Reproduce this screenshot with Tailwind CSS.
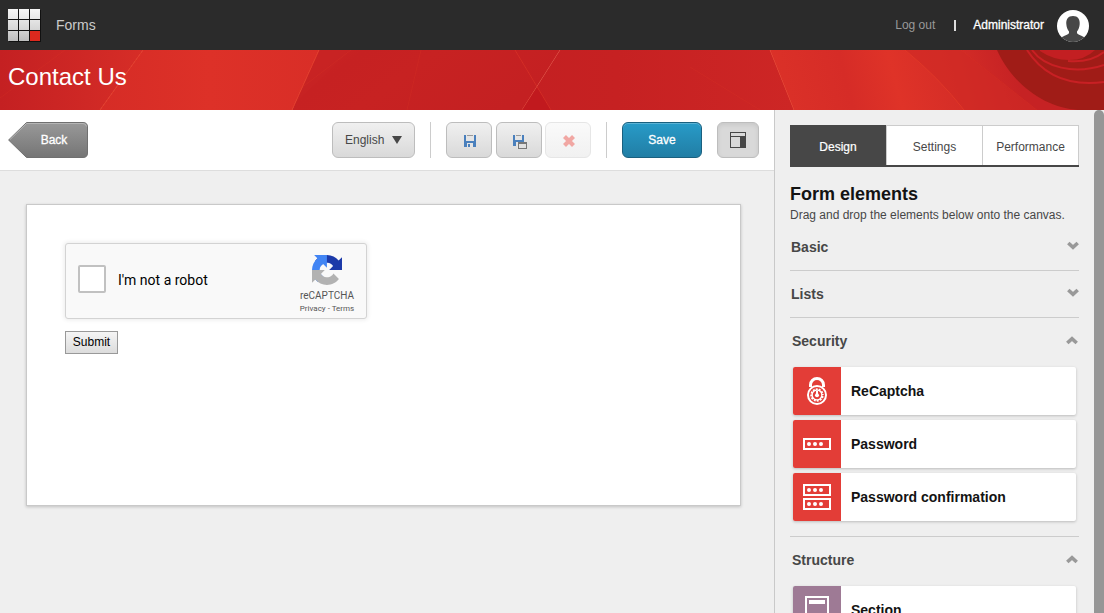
<!DOCTYPE html>
<html lang="en">
<head>
<meta charset="utf-8">
<title>Forms - Contact Us</title>
<script src="https://cdn.jsdelivr.net/npm/@tailwindcss/browser@4"></script>
</head>
<body class="h-[613px] w-[1104px] overflow-hidden flex flex-col bg-[#efefef] font-['Liberation_Sans',Arial,sans-serif] text-xs text-[#474747]">

<header class="h-[50px] shrink-0 bg-[#2b2b2b] flex items-center pl-2 pr-[15px]">
  <svg class="w-[33px] h-[33px] shrink-0" viewBox="0 0 33 33">
    <defs><linearGradient id="tile" gradientUnits="userSpaceOnUse" x1="0" y1="0" x2="0" y2="32"><stop offset="0" stop-color="#f6f6f6"/><stop offset=".6" stop-color="#d8d8d8"/><stop offset="1" stop-color="#bdbdbd"/></linearGradient></defs>
    <path fill="#111" d="M1 1h32v32H1z"/>
    <path fill="url(#tile)" d="M0 0h10v10H0zM11 0h10v10H11zM22 0h10v10H22zM0 11h10v10H0zM11 11h10v10H11zM22 11h10v10H22zM0 22h10v10H0zM11 22h10v10H11z"/>
    <path fill="#dc291e" d="M22 22h10v10H22z"/>
  </svg>
  <span class="ml-[15px] text-sm text-[#ccc]">Forms</span>
  <span class="ml-auto text-[#999]">Log out</span>
  <span class="w-0.5 h-[11px] ml-[19px] bg-[#ddd]"></span>
  <span class="ml-[17px] text-white [-webkit-text-stroke:0.3px_white]">Administrator</span>
  <svg class="ml-[13px] mt-0.5 w-8 h-8 shrink-0" viewBox="0 0 32 32">
    <clipPath id="av"><circle cx="16" cy="16" r="16"/></clipPath>
    <g clip-path="url(#av)"><path fill="#fff" d="M0 0h32v32H0z"/>
    <path fill="#474747" d="M16 6c5 0 7 3.500 6.700 8-.2 3.500-1.200 5.500-2.700 7.500v1.500c1 2 4.500 2.500 9 5V32H3v-4c4.500-2.500 8-3 9-5v-1.500c-1.500-2-2.500-4-2.700-7.500C9 9.500 11 6 16 6z"/></g>
  </svg>
</header>

<section class="h-[60px] shrink-0 grid">
  <svg class="col-start-1 row-start-1 w-full h-[60px]" viewBox="0 0 1104 60" preserveAspectRatio="none">
    <defs>
      <linearGradient id="b1"><stop offset="0" stop-color="#c42022"/><stop offset="1" stop-color="#d62d27"/></linearGradient>
      <linearGradient id="b2"><stop offset="0" stop-color="#d62c26"/><stop offset=".5" stop-color="#dd3128"/><stop offset="1" stop-color="#d92e27"/></linearGradient>
      <linearGradient id="b3" x1="0" y1="0" x2="1" y2=".3"><stop offset="0" stop-color="#cc2523"/><stop offset=".25" stop-color="#c62122"/><stop offset=".5" stop-color="#c72222"/><stop offset="1" stop-color="#c42022"/></linearGradient>
      <linearGradient id="b4"><stop offset="0" stop-color="#c42022"/><stop offset=".35" stop-color="#c62122"/><stop offset="1" stop-color="#cd2625"/></linearGradient>
      <linearGradient id="b5" gradientUnits="userSpaceOnUse" x1="780" y1="60" x2="1010" y2="0"><stop offset="0" stop-color="#db3128"/><stop offset=".3" stop-color="#d62c27"/><stop offset=".5" stop-color="#df3328"/><stop offset=".75" stop-color="#d52d27"/><stop offset="1" stop-color="#c62224"/></linearGradient>
    </defs>
    <path fill="url(#b1)" d="M0 0h143L100 60H0z"/>
    <path fill="url(#b2)" d="M143 0h176l-27 60H100z"/>
    <path fill="url(#b3)" d="M319 0h241l-38 60H292z"/>
    <path fill="#c72323" d="M319 0h32L296 52z" opacity=".7"/>
    <path fill="url(#b4)" d="M560 0h210l24 60H522z"/>
    <path fill="#c1191e" d="M537 37l14 23h-29z"/>
    <path fill="url(#b5)" d="M770 0h334v60H794z"/>
    <path fill="#d02925" d="M905 0h56l76 60h-73q-25-32-59-60z" opacity=".65"/>
    <g fill="none" stroke="#e23a28" stroke-width="1">
      <path d="M143 0L100 60M319 0l-27 60"/>
      <path d="M770 0l24 60M905 0q34 28 59 60" opacity=".85"/>
      <path d="M560 0l-38 60M515 0l36 60" opacity=".5"/>
      <path d="M65 0L0 48M351 0L296 42M421 0l-14 60M690 17l70 43M961 0l76 60" opacity=".2"/>
    </g>
    <path fill="#a01c17" d="M997 0C1012 34 1045 58 1078 60H1104V0z"/>
    <path fill="#c31f22" d="M1040 1q13 9 29 9 16 0 26-10h-55z"/>
    <g fill="none" stroke="#c82024">
      <path stroke-width="2" d="M1027 0c14 22 38 37 77 32"/>
      <path stroke-width="2" d="M1032 0c12 17 42 25 72 15"/>
      <path stroke-width="2" d="M1068 11q22 2 36-9"/>
    </g>
  </svg>
  <h1 class="col-start-1 row-start-1 pl-2 pt-[11px] text-2xl leading-8 text-white">Contact Us</h1>
</section>

<div class="flex flex-1 min-h-0">
  <main class="w-[774px] shrink-0 flex flex-col">
    <div class="h-[61px] shrink-0 bg-white border-b border-[#ddd] flex items-start pt-3 pl-2">
      <button class="grid w-20 h-9">
        <svg class="col-start-1 row-start-1 w-20 h-9" viewBox="0 0 80 36">
          <defs><linearGradient id="bk" x2="0" y2="1"><stop offset="0" stop-color="#999"/><stop offset="1" stop-color="#757575"/></linearGradient></defs>
          <path d="M18.500.5H75q4.500 0 4.500 4.500v26q0 4.500-4.500 4.500H18.500L.6 18z" fill="url(#bk)" stroke="#707070"/>
          <path d="M2 17.500L18.500 1.500H75q3 0 3.500 3" fill="none" stroke="#b5b5b5"/>
        </svg>
        <span class="col-start-1 row-start-1 self-center pl-3 text-white [-webkit-text-stroke:0.3px_white]">Back</span>
      </button>
      <button class="ml-[244px] w-[83px] h-9 rounded-md border border-[#bdbdbd] bg-linear-to-b from-[#f0f0f0] to-[#d9d9d9] flex items-center pl-3">English
        <svg class="ml-2 w-[10px] h-2" viewBox="0 0 10 8"><path fill="#474747" d="M0 0h10L5 8z"/></svg>
      </button>
      <span class="ml-[15px] w-px h-9 bg-[#ccc]"></span>
      <button class="ml-[15px] w-[46px] h-9 rounded-md border border-[#bdbdbd] bg-linear-to-b from-[#f0f0f0] to-[#d9d9d9] flex items-center justify-center">
        <svg class="ml-0.5 mt-0.5 w-3 h-3" viewBox="0 0 12 12"><path fill="#4a80bd" d="M0 0h12v12H0z"/><path fill="#e5e5e5" d="M2 0h8v6H2zM3 8h6v4H3z"/><path fill="#999" d="M3 0h6v1H3z"/><path fill="#4a80bd" d="M4 9h2v3H4z"/></svg>
      </button>
      <button class="ml-1 w-[46px] h-9 rounded-md border border-[#bdbdbd] bg-linear-to-b from-[#f0f0f0] to-[#d9d9d9] flex items-center justify-center">
        <svg class="ml-px mt-[3px] w-[14px] h-[14px]" viewBox="0 0 14 14"><path fill="#4a80bd" d="M0 0h11v11H0z"/><path fill="#e5e5e5" d="M2 0h7v5H2zM3 7h11v7H4v-3H3z"/><path fill="#999" d="M3 0h5v1H3z"/><path fill="#777" fill-rule="evenodd" d="M5 7h9v7H5zM6 9v4h7V9z"/><path fill="#e0e0e0" d="M6 9h7v4H6z"/></svg>
      </button>
      <button class="ml-[3px] w-[46px] h-9 rounded-md border border-[#e6e6e6] bg-linear-to-b from-[#fafafa] to-[#f1f1f1] flex items-center justify-center">
        <svg class="ml-0.5 mt-0.5 w-3 h-3" viewBox="0 0 12 12"><path d="M1.500 1.500l9 9M10.500 1.500l-9 9" stroke="#f1a7a3" stroke-width="4.200" fill="none"/></svg>
      </button>
      <span class="ml-[15px] w-px h-9 bg-[#ccc]"></span>
      <button class="ml-[15px] w-20 h-9 rounded-md border border-[#1a607f] bg-linear-to-b from-[#289bc8] to-[#217ea5] shadow-[inset_0_1px_0_#5cb3d5] text-white [-webkit-text-stroke:0.3px_white]">Save</button>
      <button class="ml-[15px] w-[42px] h-9 rounded-md border border-[#bdbdbd] bg-[#d9d9d9] shadow-[inset_0_2px_4px_rgba(0,0,0,0.08)] flex items-center justify-center">
        <svg class="w-4 h-4" viewBox="0 0 16 16"><path fill="#474747" fill-rule="evenodd" d="M0 0h16v16H0zM1 1v3h14V1zM1 5v10h9V5z"/></svg>
      </button>
    </div>
    <div class="ml-[26px] mt-[33px] w-[715px] h-[302px] bg-white border border-[#c9c9c9] shadow-[0_1px_3px_rgba(0,0,0,0.2)] pl-[38px] pt-[38px] text-black">
      <div class="w-[302px] h-[76px] rounded-[3px] border border-[#d3d3d3] bg-[#f9f9f9] shadow-[0_0_4px_1px_rgba(0,0,0,0.08)] flex font-[Roboto,sans-serif]">
        <span class="ml-3 mt-[21px] w-7 h-7 rounded-xs border-2 border-[#c1c1c1] bg-white"></span>
        <span class="ml-3 mt-[26px] text-sm leading-5">I'm not a robot</span>
        <div class="ml-auto mr-2 w-[62px] flex flex-col items-center text-[#555]">
          <svg class="mt-[11px] w-[30px] h-[30px]" viewBox="0 0 64 64">
            <path fill="#1c3aa9" d="M64 31.955l-.033-1.370V4.687l-7.160 7.160C50.948 4.674 42.033.093 32.050.093c-10.400 0-19.622 4.960-25.458 12.640l11.736 11.860a15.550 15.550 0 0 1 4.754-5.334c2.050-1.600 4.952-2.906 8.968-2.906.485 0 .86.057 1.135.163 4.976.393 9.288 3.140 11.828 7.124l-8.307 8.307L64 31.953"/>
            <path fill="#4285f4" d="M31.862.094l-1.370.033H4.594l7.160 7.160C4.580 13.147 0 22.060 0 32.046c0 10.400 4.960 19.622 12.640 25.458L24.500 45.768a15.550 15.550 0 0 1-5.334-4.754c-1.600-2.050-2.906-4.952-2.906-8.968 0-.485.057-.86.163-1.135.393-4.976 3.140-9.288 7.124-11.828l8.307 8.307L31.860.095"/>
            <path fill="#b2b2b2" d="M.001 32.045l.033 1.370v25.898l7.160-7.160c5.860 7.173 14.774 11.754 24.760 11.754 10.400 0 19.622-4.960 25.458-12.640l-11.736-11.860a15.550 15.550 0 0 1-4.754 5.334c-2.050 1.600-4.952 2.906-8.968 2.906-.485 0-.86-.057-1.135-.163-4.976-.393-9.288-3.140-11.828-7.124l8.307-8.307c-10.522.04-22.400.066-27.295-.005"/>
          </svg>
          <span class="mt-[6px] text-[10px] leading-[10px]">reCAPTCHA</span>
          <span class="mt-[3px] text-[8px] leading-[10px] whitespace-nowrap">Privacy - Terms</span>
        </div>
      </div>
      <button class="mt-3 w-[53px] h-[23px] border border-[#999] bg-linear-to-b from-[#f5f5f5] to-[#dcdcdc] text-xs leading-[21px]">Submit</button>
    </div>
  </main>

  <aside class="flex-1 border-l border-[#c9c9c9] pl-[15px] pr-[15px] pt-[15px] overflow-hidden">
    <nav class="w-[289px] h-[42px] grid grid-cols-[96px_97px_96px] border-b-2 border-[#474747] text-center leading-[42px]">
      <span class="h-10 border-t border-[#474747] bg-[#474747] text-white [-webkit-text-stroke:0.2px_white]">Design</span>
      <span class="h-10 bg-white border-t border-r border-l border-[#ccc]">Settings</span>
      <span class="h-10 bg-white border-t border-r border-[#ccc]">Performance</span>
    </nav>
    <h2 class="mt-[17px] text-lg leading-5 font-bold text-[#131313]">Form elements</h2>
    <p class="mt-0.5 leading-[18px] whitespace-nowrap">Drag and drop the elements below onto the canvas.</p>
    <div class="w-[289px]">
      <div class="h-[47px] border-b border-[#ccc] flex items-start pt-[13px] pl-px justify-between text-sm leading-5 font-bold"><span>Basic</span><svg class="mt-1 w-3 h-[9px]" viewBox="0 0 12 9"><path d="M1.300 2L6 6.300 10.700 2" fill="none" stroke="#999" stroke-width="3.600"/></svg></div>
      <div class="h-[47px] border-b border-[#ccc] flex items-start pt-[13px] pl-px justify-between text-sm leading-5 font-bold"><span>Lists</span><svg class="mt-1 w-3 h-[9px]" viewBox="0 0 12 9"><path d="M1.300 2L6 6.300 10.700 2" fill="none" stroke="#999" stroke-width="3.600"/></svg></div>
      <div class="h-[219px] border-b border-[#ccc] flex flex-col">
        <div class="h-[49px] flex items-start pt-[13px] pl-0.5 pr-px justify-between text-sm leading-5 font-bold"><span>Security</span><svg class="mt-[5px] w-3 h-[9px]" viewBox="0 0 12 9"><path d="M1.300 7L6 2.700 10.700 7" fill="none" stroke="#999" stroke-width="3.600"/></svg></div>
        <div class="ml-[3px] w-[283px] flex flex-col gap-[5px] text-sm font-bold text-[#131313]">
          <div class="h-12 bg-white rounded-xs overflow-hidden shadow-[0_1px_3px_rgba(0,0,0,0.22)] flex items-center gap-[10px]">
            <span class="w-12 h-12 bg-[#e33d37] flex items-center justify-center"><svg class="w-5 h-7" viewBox="0 0 20 28"><path d="M3.500 10V8a6.500 6.500 0 0 1 13 0V10" fill="none" stroke="#fff" stroke-width="3"/><circle cx="10" cy="18" r="10" fill="#fff"/><circle cx="10" cy="18" r="7.400" fill="none" stroke="#e33d37" stroke-width="1.200"/><circle cx="10" cy="18" r="6.400" fill="none" stroke="#e33d37" stroke-width="1.800" stroke-dasharray="1.200 2.150"/><circle cx="10" cy="18" r="4.200" fill="#e33d37"/><path d="M10 14v4" stroke="#fff" stroke-width="2"/><circle cx="10" cy="18.200" r="2" fill="#fff"/></svg></span>ReCaptcha
          </div>
          <div class="h-12 bg-white rounded-xs overflow-hidden shadow-[0_1px_3px_rgba(0,0,0,0.22)] flex items-center gap-[10px]">
            <span class="w-12 h-12 bg-[#e33d37] flex items-center justify-center"><svg class="w-7 h-3" viewBox="0 0 28 12"><path d="M1 1h26v10H1z" fill="none" stroke="#fff" stroke-width="2"/><path d="M6 6h0M12 6h0M18 6h0" stroke="#fff" stroke-width="4" stroke-linecap="round"/></svg></span>Password
          </div>
          <div class="h-12 bg-white rounded-xs overflow-hidden shadow-[0_1px_3px_rgba(0,0,0,0.22)] flex items-center gap-[10px]">
            <span class="w-12 h-12 bg-[#e33d37] flex items-center justify-center"><svg class="w-7 h-[26px]" viewBox="0 0 28 26"><path d="M1 1h26v10H1zM1 15h26v10H1z" fill="none" stroke="#fff" stroke-width="2"/><path d="M6 6h0M12 6h0M18 6h0M6 20h0M12 20h0M18 20h0" stroke="#fff" stroke-width="4" stroke-linecap="round"/></svg></span>Password confirmation
          </div>
        </div>
      </div>
      <div class="h-[49px] flex items-start pt-[13px] pl-0.5 pr-px justify-between text-sm leading-5 font-bold"><span>Structure</span><svg class="mt-[5px] w-3 h-[9px]" viewBox="0 0 12 9"><path d="M1.300 7L6 2.700 10.700 7" fill="none" stroke="#999" stroke-width="3.600"/></svg></div>
      <div class="ml-[3px] w-[283px] h-12 bg-white rounded-xs overflow-hidden shadow-[0_1px_3px_rgba(0,0,0,0.22)] flex items-center gap-[10px] text-sm font-bold text-[#131313]">
        <span class="w-12 h-12 bg-[#9e7a95] flex items-center justify-center"><svg class="w-6 h-7" viewBox="0 0 24 28"><path d="M1 1h22v26H1z" fill="none" stroke="#fff" stroke-width="2"/><path fill="#fff" d="M4 4h16v4H4z"/></svg></span>Section
      </div>
    </div>
  </aside>
  <div class="w-[10px] shrink-0 bg-[#efefef]"><div class="h-full bg-[#969696] rounded-t-[5px]"></div></div>
</div>
</body>
</html>
